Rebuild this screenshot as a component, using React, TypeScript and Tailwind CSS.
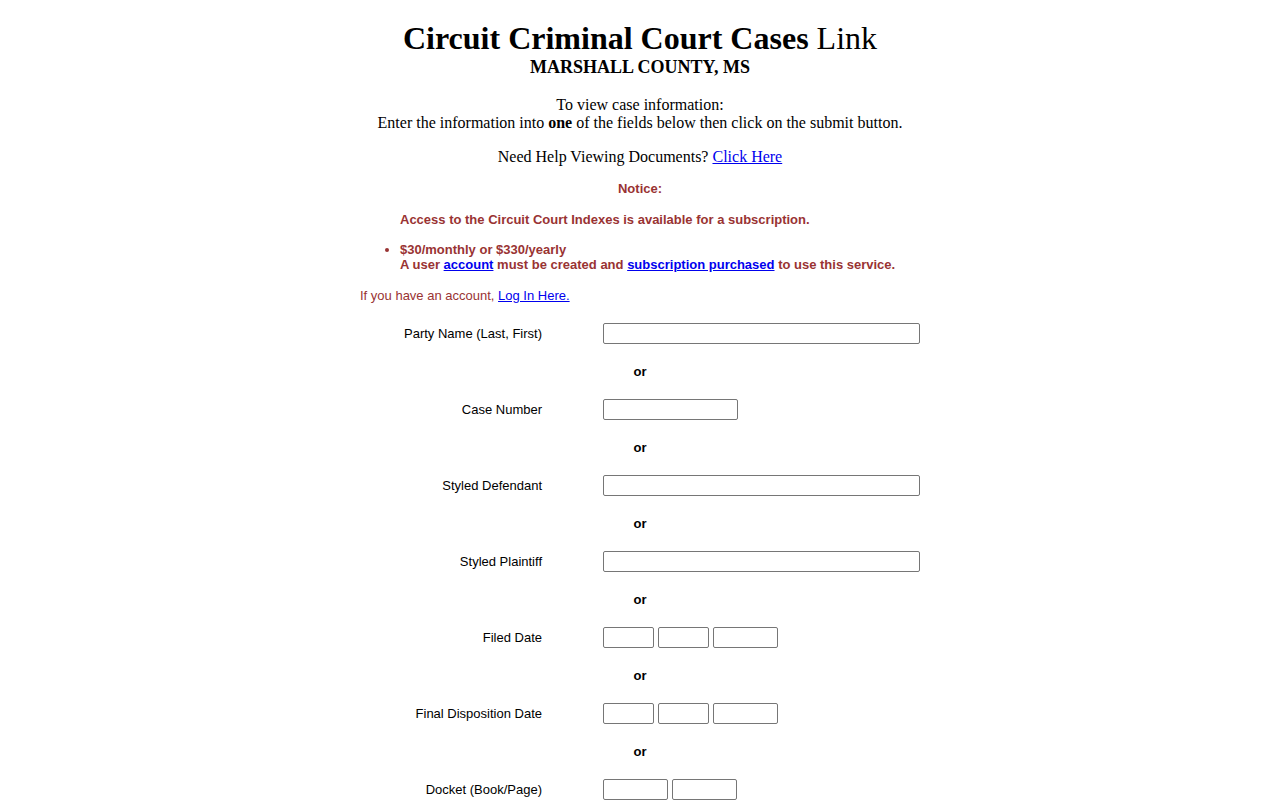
import React from "react";

function Field({ label, children }: { label: string; children: React.ReactNode }) {
  return (
    <div className="grid grid-cols-[182px_1fr] gap-x-[61px] h-[38px] items-center">
      <div className="text-right text-black">{label}</div>
      <div className="flex gap-[4px] items-center">{children}</div>
    </div>
  );
}

function Or() {
  return <div className="h-[38px] flex items-center justify-center font-bold text-black">or</div>;
}

function Input({ w }: { w: string }) {
  return <input type="text" className={`${w} h-[21px] border border-[#767676] rounded-[2px] bg-white px-[2px] outline-none`} />;
}

export default function App() {
  return (
    <div className="min-h-screen bg-white">
      <div className="w-[560px] mx-auto font-['Liberation_Serif',serif] text-black pb-10">
        <div className="pt-[20px] text-center text-[32px] leading-[36px]">
          <b>Circuit Criminal Court Cases</b> Link
        </div>
        <div className="mt-[1px] text-center text-[18px] leading-[20px] font-bold">MARSHALL COUNTY, MS</div>
        <div className="mt-[19px] text-center text-[16px] leading-[18px]">
          To view case information:
          <br />
          Enter the information into <b>one</b> of the fields below then click on the submit button.
        </div>
        <div className="mt-[16px] text-center text-[16px] leading-[18px]">
          Need Help Viewing Documents?{" "}
          <a href="#" className="text-[#0000ee] underline">
            Click Here
          </a>
        </div>
        <div className="font-['Liberation_Sans',Arial,sans-serif] text-[13px] leading-[15px]">
          <div className="text-[#993333] font-bold">
            <div className="mt-[15px] text-center">Notice:</div>
            <div className="mt-[16px] pl-[40px]">Access to the Circuit Court Indexes is available for a subscription.</div>
            <ul className="mt-[15px] pl-[40px] list-disc">
              <li>
                $30/monthly or $330/yearly
                <br />
                A user{" "}
                <a href="#" className="text-[#0000ee] underline">
                  account
                </a>{" "}
                must be created and{" "}
                <a href="#" className="text-[#0000ee] underline">
                  subscription purchased
                </a>{" "}
                to use this service.
              </li>
            </ul>
          </div>
          <div className="mt-[16px] text-[#993333]">
            If you have an account,{" "}
            <a href="#" className="text-[#0000ee] underline">
              Log In Here.
            </a>
          </div>
          <div className="mt-[11px]">
            <Field label="Party Name (Last, First)">
              <Input w="w-[317px]" />
            </Field>
            <Or />
            <Field label="Case Number">
              <Input w="w-[135px]" />
            </Field>
            <Or />
            <Field label="Styled Defendant">
              <Input w="w-[317px]" />
            </Field>
            <Or />
            <Field label="Styled Plaintiff">
              <Input w="w-[317px]" />
            </Field>
            <Or />
            <Field label="Filed Date">
              <Input w="w-[51px]" />
              <Input w="w-[51px]" />
              <Input w="w-[65px]" />
            </Field>
            <Or />
            <Field label="Final Disposition Date">
              <Input w="w-[51px]" />
              <Input w="w-[51px]" />
              <Input w="w-[65px]" />
            </Field>
            <Or />
            <Field label="Docket (Book/Page)">
              <Input w="w-[65px]" />
              <Input w="w-[65px]" />
            </Field>
            <div className="mt-[20px] flex justify-center gap-2">
              <button className="border border-[#767676] rounded-[2px] bg-[#efefef] px-[6px] py-[1px]">Submit</button>
              <button className="border border-[#767676] rounded-[2px] bg-[#efefef] px-[6px] py-[1px]">Reset</button>
            </div>
          </div>
        </div>
      </div>
    </div>
  );
}
